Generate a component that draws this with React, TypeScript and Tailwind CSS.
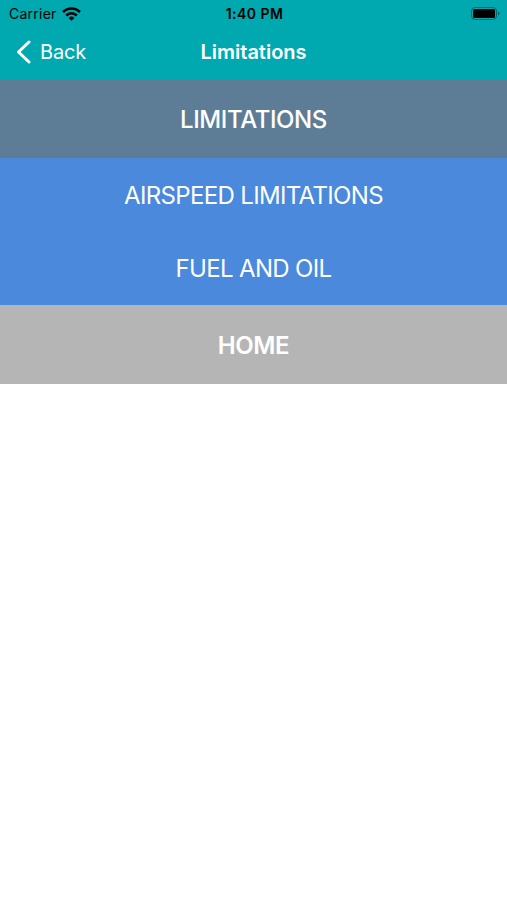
import React from "react";

const rows = [
  { label: "LIMITATIONS", className: "h-[79px] pt-0.5 bg-[#5d7d96] font-[550] tracking-[-0.4px]" },
  { label: "AIRSPEED LIMITATIONS", className: "h-[74px] pt-px bg-[#4a89dc] tracking-[-0.65px]" },
  { label: "FUEL AND OIL", className: "h-[73px] pt-px bg-[#4a89dc] tracking-[-0.65px]" },
  { label: "HOME", className: "h-[79px] pt-[3px] bg-[#b5b5b5] font-semibold tracking-[-0.4px]" },
];

function StatusBar() {
  return (
    <div className="flex h-[27px] items-center justify-between pl-[9px] pr-[7px] text-black">
      <div className="flex w-[90px] items-center gap-[5px]">
        <span className="text-[14px] tracking-[0.25px]">Carrier</span>
        <svg width="19" height="14" viewBox="0 0 18 13" fill="none" stroke="currentColor" strokeWidth="2.5">
          <path d="M1 4.6a11.3 11.3 0 0 1 16 0" />
          <path d="M4 7.9a7 7 0 0 1 10 0" />
          <path d="M9 13 6.2 10.2a4 4 0 0 1 5.6 0Z" fill="currentColor" stroke="none" />
        </svg>
      </div>
      <span className="text-[14px] font-semibold tracking-[0.45px]">1:40 PM</span>
      <div className="flex w-[90px] justify-end">
        <svg width="29" height="14" viewBox="0 0 29 14">
          <rect x="0.5" y="0.5" width="25" height="12" rx="3.5" fill="none" stroke="#000" strokeOpacity="0.4" />
          <rect x="2" y="2" width="22" height="9" rx="1.5" />
          <path d="M27 4.5c2 .8 2 3.2 0 4Z" fillOpacity="0.4" />
        </svg>
      </div>
    </div>
  );
}

export default function App() {
  return (
    <div className="min-h-screen bg-white font-['Inter',sans-serif]">
      <header className="h-[79px] bg-[#00a8b0]">
        <StatusBar />
        <nav className="grid h-[50px] grid-cols-3 items-center text-[20px] text-white">
          <button className="flex items-center gap-[9px] pl-4 tracking-[-0.2px]">
            <svg width="15" height="24" viewBox="0 0 15 24" fill="none" stroke="currentColor" strokeWidth="3" strokeLinecap="round" strokeLinejoin="round">
              <path d="M13 2 2.5 12 13 22" />
            </svg>
            Back
          </button>
          <h1 className="text-center font-semibold">Limitations</h1>
        </nav>
      </header>
      <main className="text-[24px] text-white">
        {rows.map((row) => (
          <div key={row.label} className={`flex items-center justify-center ${row.className}`}>
            {row.label}
          </div>
        ))}
      </main>
    </div>
  );
}
